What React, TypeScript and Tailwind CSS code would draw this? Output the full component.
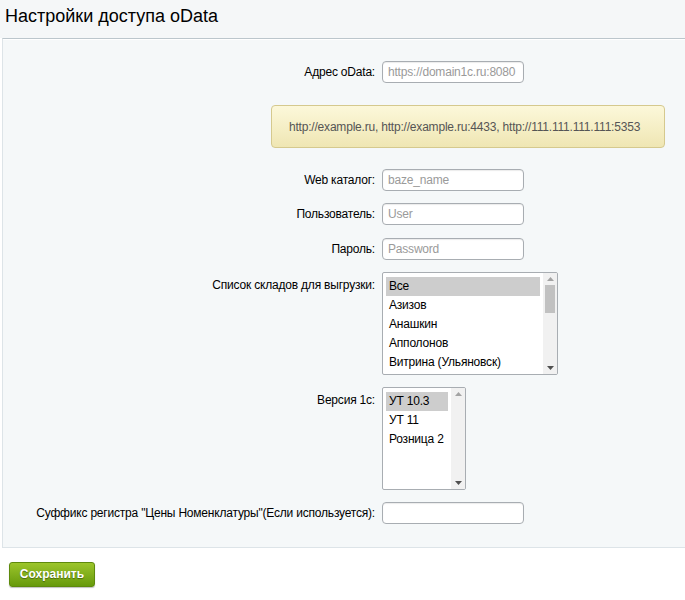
import React from 'react';

const font = { fontFamily: '"Liberation Sans", Arial, sans-serif' };

const Label: React.FC<{ text: string; top?: boolean }> = ({ text, top }) => (
    <div className={`w-[379px] shrink-0 text-right pr-[7px] text-[12px] tracking-[-0.2px] text-black whitespace-nowrap ${top ? 'pt-[4px]' : 'leading-[22px]'}`}>
        {text}
    </div>
);

const TextInput: React.FC<{ placeholder?: string }> = ({ placeholder }) => (
    <input
        type="text"
        placeholder={placeholder}
        className="w-[142px] h-[22px] shrink-0 bg-white border border-[#a8adb2] rounded-[4px] px-[5px] text-[12px] tracking-[-0.2px] text-black placeholder:text-[#9a9a9a] shadow-[inset_0_1px_1px_rgba(0,0,0,0.08)] outline-none"
    />
);

const Scrollbar: React.FC<{ thumb?: boolean }> = ({ thumb }) => (
    <div className="w-[14px] h-full bg-[#f1f1f1] flex flex-col items-center justify-between py-[4px]">
        <div className="flex flex-col items-center w-full">
            <svg width="7" height="4" viewBox="0 0 7 4"><path d="M0 4 L3.5 0 L7 4 Z" fill="#a3a3a3" /></svg>
            {thumb && <div className="mt-[4px] w-[10px] h-[28px] bg-[#c1c1c1]" />}
        </div>
        <svg width="7" height="4" viewBox="0 0 7 4"><path d="M0 0 L3.5 4 L7 0 Z" fill="#505050" /></svg>
    </div>
);

const ListBox: React.FC<{ items: string[]; width: string; selWidth: string; thumb?: boolean }> = ({ items, width, selWidth, thumb }) => (
    <div className={`${width} h-[103px] shrink-0 bg-white border border-[#a8adb2] rounded-[2px] flex overflow-hidden`}>
        <div className="flex-1 pt-[4px] pl-[3px]">
            {items.map((it, i) => (
                <div key={it} className={`${selWidth} h-[19px] leading-[19px] pl-[3px] text-[12px] tracking-[-0.2px] text-black whitespace-nowrap ${i === 0 ? 'bg-[#cdcdcd]' : ''}`}>
                    {it}
                </div>
            ))}
        </div>
        <Scrollbar thumb={thumb} />
    </div>
);

export default function App() {
    return (
        <div className="w-[685px] min-h-[600px] bg-white" style={font}>
            {/* Header */}
            <div className="h-[38px] bg-[#f5f7f8] pl-[5px] pt-[5px]">
                <h1 className="text-[18px] leading-[22px] text-black font-normal">Настройки доступа oData</h1>
            </div>

            {/* Panel */}
            <div className="ml-[2px] bg-[#f5f8f9] border-t border-t-[#bcc6cc] border-l border-l-[#dde4e8] border-b border-b-[#dde4e8] shadow-[inset_0_1px_0_#ffffff] pt-[22px] pb-[23px]">
                <div className="flex">
                    <Label text="Адрес oData:" />
                    <TextInput placeholder="https://domain1c.ru:8080" />
                </div>

                <div className="mt-[22px] ml-[268px] w-[394px] h-[43px] flex items-center pl-[17px] rounded-[4px] border border-[#d5c98e] bg-gradient-to-b from-[#fcf8da] to-[#efe6b3] text-[12px] tracking-[-0.2px] text-[#555555] whitespace-nowrap">
                    http://example.ru, http://example.ru:4433, http://111.111.111.111:5353
                </div>

                <div className="flex mt-[21px]">
                    <Label text="Web каталог:" />
                    <TextInput placeholder="baze_name" />
                </div>
                <div className="flex mt-[12px]">
                    <Label text="Пользователь:" />
                    <TextInput placeholder="User" />
                </div>
                <div className="flex mt-[13px]">
                    <Label text="Пароль:" />
                    <TextInput placeholder="Password" />
                </div>

                <div className="flex mt-[12px]">
                    <Label text="Список складов для выгрузки:" top />
                    <ListBox
                        items={['Все', 'Азизов', 'Анашкин', 'Апполонов', 'Витрина (Ульяновск)']}
                        width="w-[176px]"
                        selWidth="w-[154px]"
                        thumb
                    />
                </div>

                <div className="flex mt-[12px]">
                    <Label text="Версия 1с:" top />
                    <ListBox items={['УТ 10.3', 'УТ 11', 'Розница 2']} width="w-[84px]" selWidth="w-[62px]" />
                </div>

                <div className="flex mt-[12px]">
                    <Label text={'Суффикс регистра "Цены Номенклатуры"(Если используется):'} />
                    <TextInput />
                </div>
            </div>

            {/* Save */}
            <div className="pt-[13px] pl-[9px]">
                <button className="w-[86px] h-[25px] rounded-[3px] border border-[#5e8a0c] bg-gradient-to-b from-[#9cc52a] to-[#679a0b] text-white font-bold text-[12px] [text-shadow:0_1px_1px_rgba(0,0,0,0.4)] shadow-[0_1px_1px_rgba(0,0,0,0.25)]">
                    Сохранить
                </button>
            </div>
        </div>
    );
}
